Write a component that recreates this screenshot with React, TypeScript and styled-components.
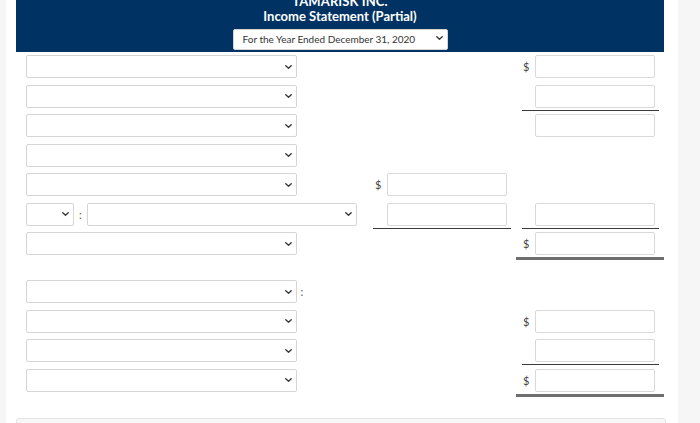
import React from 'react'
import styled, { createGlobalStyle } from 'styled-components'

const GlobalStyle = createGlobalStyle`
  html, body {
    margin: 0;
    padding: 0;
    background: #f6f6f6;
    font-family: Lato, "Open Sans", Arial, sans-serif;
    color: #333;
  }
`

const Page = styled.div`
  width: 700px;
  height: 423px;
  overflow: hidden;
  display: flex;
`

const Card = styled.div`
  margin-left: 6px;
  width: 672px;
  background: #fff;
  padding: 0 14px 0 10px;
  box-sizing: border-box;
`

const Header = styled.div`
  background: #003263;
  color: #fff;
  height: 52px;
  overflow: hidden;
  display: flex;
  flex-direction: column;
  align-items: center;
`

const Company = styled.div`
  margin-top: -6px;
  font-size: 13px;
  line-height: 15px;
  font-weight: 700;
  letter-spacing: 0.1px;
`

const Title = styled.div`
  font-size: 13px;
  line-height: 15px;
  font-weight: 700;
`

const SelectBox = styled.div<{ $w: number }>`
  position: relative;
  width: ${p => p.$w}px;
  height: 23px;
  flex: none;
`

const NativeSelect = styled.select<{ $small?: boolean }>`
  appearance: none;
  -webkit-appearance: none;
  width: 100%;
  height: 100%;
  box-sizing: border-box;
  border: 1px solid #d5d5d5;
  border-radius: 2px;
  background: #fff;
  font-family: Lato, "Open Sans", Arial, sans-serif;
  font-size: ${p => (p.$small ? 10 : 12)}px;
  color: #333;
  padding: 0 20px 0 9px;
  outline: none;
`

const Chevron = styled.svg`
  position: absolute;
  right: 5px;
  top: 50%;
  margin-top: -2px;
  pointer-events: none;
`

const DateSelect = styled(SelectBox)`
  margin-top: 3px;
  height: 21px;
`

const Body = styled.div`
  padding: 3px 0 0 10px;
`

const Row = styled.div<{ $gapAfter?: number }>`
  display: grid;
  grid-template-columns: 347px 143px 148px;
  height: 29.5px;
  align-items: start;
  margin-bottom: ${p => p.$gapAfter ?? 0}px;
`

const LabelCell = styled.div`
  display: flex;
  align-items: center;
  height: 23px;
`

const Colon = styled.span<{ $w: number }>`
  width: ${p => p.$w}px;
  flex: none;
  text-align: center;
  font-size: 11px;
  color: #555;
  line-height: 23px;
`

type Rule = 'none' | 'single' | 'double'

const AmountLine = styled.div<{ $rule: Rule; $col: 'mid' | 'right' }>`
  display: flex;
  align-items: center;
  box-sizing: content-box;
  ${p =>
    p.$col === 'mid'
      ? `margin: 0 5px 0 0; padding: 0 4px ${p.$rule === 'none' ? 0 : 2}px 0;`
      : p.$rule === 'double'
      ? `margin: 0; padding: 0 9px 2px 6px;`
      : `margin: 0 5px 0 6px; padding: 0 4px ${p.$rule === 'none' ? 0 : 2}px 0;`}
  border-bottom: ${p =>
    p.$rule === 'single' ? '1px solid #3a3a3a' : p.$rule === 'double' ? '3px solid #6e6e6e' : 'none'};
`

const Dollar = styled.span<{ $w: number; $pad: number }>`
  width: ${p => p.$w}px;
  padding-left: ${p => p.$pad}px;
  box-sizing: border-box;
  flex: none;
  font-size: 11px;
  color: #444;
  line-height: 23px;
`

const AmountInput = styled.input`
  width: 120px;
  height: 23px;
  box-sizing: border-box;
  border: 1px solid #d9d9d9;
  border-radius: 2px;
  background: #fff;
  flex: none;
  outline: none;
  padding: 0 6px;
  font-family: Lato, "Open Sans", Arial, sans-serif;
`

const Footer = styled.div`
  margin-top: 20px;
  margin-right: -2px;
  height: 30px;
  border: 1px solid #e4e4e4;
  border-radius: 3px;
  background: #f7f7f7;
`

const ChevronIcon = () => (
  <Chevron width="7" height="4" viewBox="0 0 7 4">
    <path d="M0.8 0.8 L3.5 3.3 L6.2 0.8" fill="none" stroke="#3a3a3a" strokeWidth="1.4" strokeLinecap="round" strokeLinejoin="round" />
  </Chevron>
)

const Dropdown = ({ w, small, children }: { w: number; small?: boolean; children?: React.ReactNode }) => (
  <SelectBox $w={w}>
    <NativeSelect $small={small} defaultValue="">
      {children ?? <option value=""></option>}
    </NativeSelect>
    <ChevronIcon />
  </SelectBox>
)

const Amount = ({ col, rule = 'none', dollar = false }: { col: 'mid' | 'right'; rule?: Rule; dollar?: boolean }) => {
  const w = col === 'mid' ? 14 : 13
  const pad = col === 'mid' ? 2 : 1
  return (
    <AmountLine $rule={rule} $col={col}>
      <Dollar $w={w} $pad={pad}>{dollar ? '$' : ''}</Dollar>
      <AmountInput type="text" />
    </AmountLine>
  )
}

type RowDef = {
  label: 'full' | 'split' | 'colon'
  mid?: { rule?: Rule; dollar?: boolean }
  right?: { rule?: Rule; dollar?: boolean }
  gapAfter?: number
}

const rows: RowDef[] = [
  { label: 'full', right: { dollar: true } },
  { label: 'full', right: { rule: 'single' } },
  { label: 'full', right: {} },
  { label: 'full' },
  { label: 'full', mid: { dollar: true } },
  { label: 'split', mid: { rule: 'single' }, right: { rule: 'single' } },
  { label: 'full', right: { rule: 'double', dollar: true }, gapAfter: 18.5 },
  { label: 'colon' },
  { label: 'full', right: { dollar: true } },
  { label: 'full', right: { rule: 'single' } },
  { label: 'full', right: { rule: 'double', dollar: true } },
]

export default function App() {
  return (
    <>
      <GlobalStyle />
      <Page>
        <Card>
          <Header>
            <Company>TAMARISK INC.</Company>
            <Title>Income Statement (Partial)</Title>
            <DateSelect $w={215}>
              <NativeSelect $small defaultValue="year">
                <option value="year">For the Year Ended December 31, 2020</option>
              </NativeSelect>
              <ChevronIcon />
            </DateSelect>
          </Header>
          <Body>
            {rows.map((r, i) => (
              <Row key={i} $gapAfter={r.gapAfter}>
                <LabelCell>
                  {r.label === 'split' ? (
                    <>
                      <Dropdown w={48} />
                      <Colon $w={13}>:</Colon>
                      <Dropdown w={270} />
                    </>
                  ) : (
                    <>
                      <Dropdown w={271} />
                      {r.label === 'colon' && <Colon $w={10}>:</Colon>}
                    </>
                  )}
                </LabelCell>
                <div>{r.mid && <Amount col="mid" rule={r.mid.rule} dollar={r.mid.dollar} />}</div>
                <div>{r.right && <Amount col="right" rule={r.right.rule} dollar={r.right.dollar} />}</div>
              </Row>
            ))}
          </Body>
          <Footer />
        </Card>
      </Page>
    </>
  )
}
